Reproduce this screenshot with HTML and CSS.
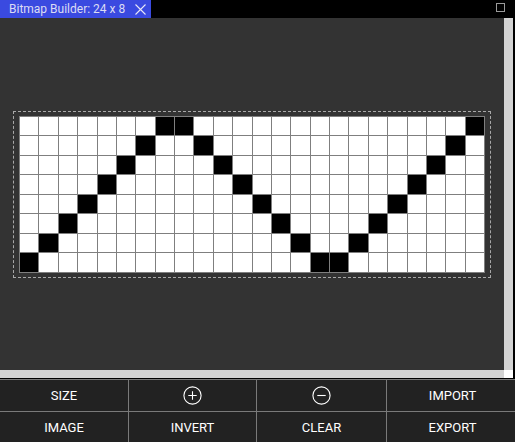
FILE: index.html
```html
<!DOCTYPE html>
<html>
<head>
<meta charset="utf-8">
<link rel="stylesheet" href="styles.css">
</head>
<body>
<div class="titlebar">
  <div class="tab">
    <span class="tab-title">Bitmap Builder: 24 x 8</span>
    <svg class="tab-close" width="11" height="11" viewBox="0 0 11 11"><path d="M0.5 0.5L10.5 10.5M10.5 0.5L0.5 10.5" stroke="#e8e8f8" stroke-width="1.1" fill="none"/></svg>
  </div>
  <svg class="maximize" width="9" height="9" viewBox="0 0 9 9"><rect x="0.5" y="0.5" width="8" height="8" fill="none" stroke="#9a9a9a" stroke-width="1"/></svg>
</div>
<div class="main">
  <div class="canvas">
    <div class="frame">
      <div class="grid" id="grid"></div>
    </div>
  </div>
  <div class="vscroll"></div>
</div>
<div class="hbar">
  <div class="hscroll"></div>
  <div class="corner"></div>
</div>
<div class="buttons">
  <div class="btn">SIZE</div>
  <div class="btn"><svg width="19" height="19" viewBox="0 0 19 19"><circle cx="9.5" cy="9.5" r="8.6" fill="none" stroke="#fff" stroke-width="1.1"/><path d="M9.5 5.3V13.7M5.3 9.5H13.7" stroke="#fff" stroke-width="1.1"/></svg></div>
  <div class="btn"><svg width="19" height="19" viewBox="0 0 19 19"><circle cx="9.5" cy="9.5" r="8.6" fill="none" stroke="#fff" stroke-width="1.1"/><path d="M5.3 9.5H13.7" stroke="#fff" stroke-width="1.1"/></svg></div>
  <div class="btn">IMPORT</div>
  <div class="btn">IMAGE</div>
  <div class="btn">INVERT</div>
  <div class="btn">CLEAR</div>
  <div class="btn">EXPORT</div>
</div>
<script>
  var rows = [7,6,5,4,3,2,1,0,0,1,2,3,4,5,6,7,7,6,5,4,3,2,1,0];
  var g = document.getElementById('grid');
  for (var r = 0; r < 8; r++) {
    for (var c = 0; c < 24; c++) {
      var d = document.createElement('div');
      d.className = 'cell' + (rows[c] === r ? ' on' : '');
      g.appendChild(d);
    }
  }
</script>
</body>
</html>
```
FILE: styles.css
```css
html, body {
  margin: 0;
  padding: 0;
  background: #000;
  width: 515px;
  height: 442px;
  overflow: hidden;
  font-family: Roboto, "Liberation Sans", sans-serif;
}
.titlebar {
  height: 18px;
  display: flex;
  align-items: stretch;
  justify-content: space-between;
  background: #000;
}
.tab {
  width: 151px;
  background: #3a4ae0;
  display: flex;
  align-items: center;
  box-sizing: border-box;
  padding-left: 9px;
}
.tab-title {
  color: #dcdcf4;
  font-size: 12px;
  white-space: nowrap;
}
.tab-close {
  margin-left: 10px;
}
.maximize {
  margin: 3px 10px 0 0;
}
.main {
  height: 352px;
  display: flex;
}
.canvas {
  width: 504px;
  background: #333333;
  display: flex;
  align-items: center;
  justify-content: center;
}
.vscroll {
  width: 9px;
  background: #d3d3d3;
}
.frame {
  border: 1px dashed #a8a8a8;
  padding: 4px 5px;
}
.grid {
  width: 466px;
  height: 157px;
  box-sizing: border-box;
  border: 1px solid #7f7f7f;
  background: #7f7f7f;
  display: grid;
  grid-template-columns: repeat(24, 1fr);
  grid-template-rows: repeat(8, 1fr);
  gap: 1px;
}
.cell {
  background: #fff;
}
.cell.on {
  background: #000;
}
.hbar {
  height: 9px;
  display: flex;
  background: #000;
}
.hscroll {
  width: 504px;
  height: 8px;
  background: #d3d3d3;
}
.corner {
  width: 9px;
  height: 8px;
  background: #fff;
}
.buttons {
  height: 63px;
  display: grid;
  grid-template-columns: 128px 127px 129px 131px;
  grid-template-rows: 31px 31px;
  background: #7a7a7a;
  border-top: 1px solid #7a7a7a;
  gap: 1px;
}
.btn {
  background: #222222;
  color: #ffffff;
  font-size: 13px;
  display: flex;
  align-items: center;
  justify-content: center;
}
```
